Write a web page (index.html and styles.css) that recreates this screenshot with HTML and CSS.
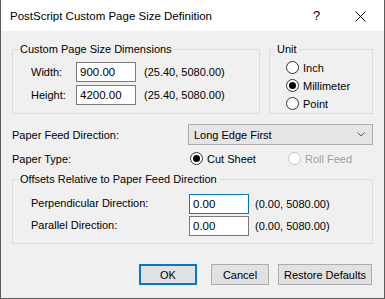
FILE: index.html
```html
<!DOCTYPE html>
<html lang="en">

<head>
    <meta charset="UTF-8">
    <title>PostScript Custom Page Size Definition</title>
    <link rel="stylesheet" href="styles.css">
</head>

<body>
    <div class="window">
        <div class="titlebar">
            <span class="title">PostScript Custom Page Size Definition</span>
            <span class="help">?</span>
            <span class="close">
                <svg width="11" height="11" viewBox="0 0 11 11">
                    <path d="M0.5 0.5 L10.5 10.5 M10.5 0.5 L0.5 10.5" stroke="#000" stroke-width="1" fill="none" />
                </svg>
            </span>
        </div>
        <div class="content">
            <div class="top-row">
                <fieldset class="group dims">
                    <legend>Custom Page Size Dimensions</legend>
                    <div class="dim-grid">
                        <span class="lbl">Width:</span>
                        <div class="input">900.00</div>
                        <span class="range">(25.40, 5080.00)</span>
                        <span class="lbl">Height:</span>
                        <div class="input">4200.00</div>
                        <span class="range">(25.40, 5080.00)</span>
                    </div>
                </fieldset>
                <fieldset class="group unit">
                    <legend>Unit</legend>
                    <div class="radio-list">
                        <div class="radio"><span class="circle"></span>Inch</div>
                        <div class="radio"><span class="circle checked"></span>Millimeter</div>
                        <div class="radio"><span class="circle"></span>Point</div>
                    </div>
                </fieldset>
            </div>

            <div class="feed-row">
                <span class="row-lbl">Paper Feed Direction:</span>
                <div class="combo">
                    <span>Long Edge First</span>
                    <svg width="8" height="5" viewBox="0 0 8 5">
                        <path d="M0.5 0.5 L4 4 L7.5 0.5" stroke="#555" stroke-width="1" fill="none" />
                    </svg>
                </div>
            </div>

            <div class="type-row">
                <span class="row-lbl">Paper Type:</span>
                <div class="radio cut"><span class="circle checked"></span>Cut Sheet</div>
                <div class="radio disabled"><span class="circle"></span>Roll Feed</div>
            </div>

            <fieldset class="group offsets">
                <legend>Offsets Relative to Paper Feed Direction</legend>
                <div class="off-grid">
                    <span class="lbl">Perpendicular Direction:</span>
                    <div class="input focus">0.00</div>
                    <span class="range">(0.00, 5080.00)</span>
                    <span class="lbl">Parallel Direction:</span>
                    <div class="input">0.00</div>
                    <span class="range">(0.00, 5080.00)</span>
                </div>
            </fieldset>

            <div class="buttons">
                <div class="btn default">OK</div>
                <div class="btn cancel">Cancel</div>
                <div class="btn restore">Restore Defaults</div>
            </div>
        </div>
    </div>
</body>

</html>
```

FILE: styles.css
```css
* {
    padding: 0;
    margin: 0;
    box-sizing: border-box;
}

body {
    font-family: "Liberation Sans", Arial, sans-serif;
    font-size: 11px;
    color: #000;
    background: #fff;
}

.window {
    width: 385px;
    height: 299px;
    background: #f0f0f0;
    border: 1px solid #5c5c5c;
    border-top: 0;
}

.titlebar {
    height: 31px;
    background: #fff;
    display: flex;
    align-items: center;
    padding-left: 9px;
}

.title {
    flex: 1;
    font-size: 11.5px;
}

.help {
    font-size: 13px;
    width: 42px;
}

.close {
    display: flex;
    width: 11px;
    margin-right: 18px;
    margin-top: 1px;
}

.content {
    padding: 0 11px;
}

/* group boxes */
.group {
    border: 1px solid #dcdcdc;
    padding: 0 5px;
    min-width: 0;
}

.group legend {
    padding: 0 2px;
    line-height: 13px;
}

.top-row {
    display: flex;
    gap: 9px;
    margin-top: 12px;
}

.dims {
    width: 248px;
}

.unit {
    width: 104px;
}

.dim-grid {
    display: grid;
    grid-template-columns: 45px 60px auto;
    grid-auto-rows: 20px;
    row-gap: 3px;
    align-items: center;
    margin: 6px 0 8px 13px;
}

.input {
    height: 20px;
    background: #fff;
    border: 1px solid #7a7a7a;
    font-size: 11.5px;
    line-height: 18px;
    padding-left: 3px;
}

.input.focus {
    border-color: #0078d7;
}

.range {
    margin-left: 8px;
}

/* radios */
.radio-list {
    margin: 5px 0 0 11px;
    display: flex;
    flex-direction: column;
    gap: 5px;
}

.radio {
    display: flex;
    align-items: center;
    height: 13px;
}

.circle {
    width: 13px;
    height: 13px;
    border: 1px solid #333;
    border-radius: 50%;
    background: #fff;
    margin-right: 4px;
    display: flex;
    align-items: center;
    justify-content: center;
}

.circle.checked::after {
    content: "";
    width: 7px;
    height: 7px;
    border-radius: 50%;
    background: #000;
}

.radio.disabled {
    color: #a0a0a0;
}

.radio.disabled .circle {
    border-color: #c4c4c4;
}

.feed-row {
    display: flex;
    align-items: center;
    margin-top: 10px;
}

.row-lbl {
    width: 176px;
}

.combo {
    flex: 1;
    height: 21px;
    background: #e5e5e5;
    border: 1px solid #adadad;
    display: flex;
    align-items: center;
    justify-content: space-between;
    padding: 0 7px 0 5px;
}

.type-row {
    display: flex;
    align-items: center;
    margin-top: 7px;
}

.type-row .cut {
    margin-left: 2px;
    width: 98px;
}

.offsets {
    margin-top: 8px;
}

.off-grid {
    display: grid;
    grid-template-columns: 158px 60px auto;
    grid-auto-rows: 20px;
    row-gap: 2px;
    align-items: center;
    margin: 8px 0 7px 13px;
}

.off-grid .range {
    margin-left: 6px;
}

.off-grid .lbl {
    margin-top: -3px;
}

.buttons {
    display: flex;
    justify-content: flex-end;
    margin-top: 20px;
    padding-right: 1px;
}

.btn {
    height: 21px;
    background: #e1e1e1;
    border: 1px solid #adadad;
    display: flex;
    align-items: center;
    justify-content: center;
}

.btn.default {
    width: 58px;
    border: 2px solid #0078d7;
    margin-right: 14px;
}

.btn.cancel {
    width: 58px;
    margin-right: 9px;
}

.btn.restore {
    width: 94px;
}
```
